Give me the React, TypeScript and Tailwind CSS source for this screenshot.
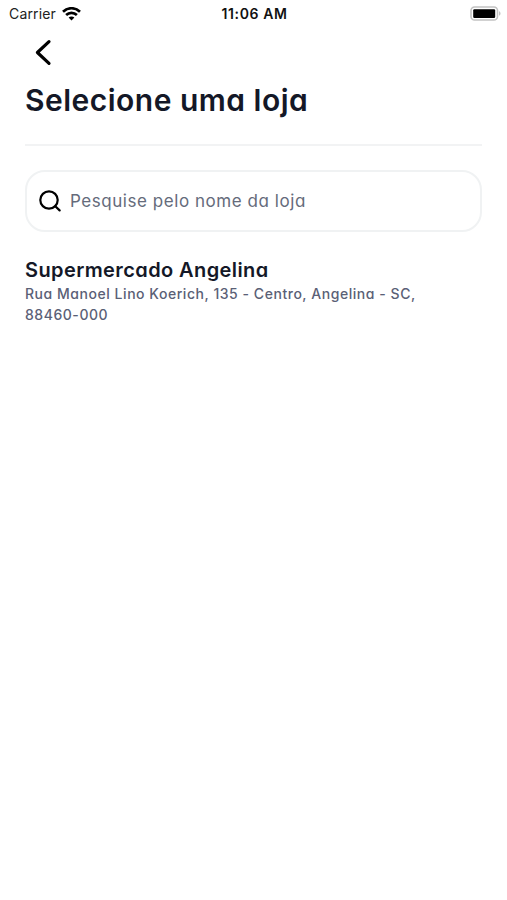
import React from 'react';

function WifiIcon() {
  return (
    <svg width="19" height="14" viewBox="0 0 19 14" fill="none" stroke="#000" strokeWidth="2.7">
      <path d="M1 4.7C5.8 0.1 13.2 0.1 18 4.7" />
      <path d="M4.1 8.1C7.2 5.2 11.8 5.2 14.9 8.1" />
      <path d="M9.5 13.4L6.6 10.5C8.2 9 10.8 9 12.4 10.5Z" fill="#000" stroke="none" />
    </svg>
  );
}

function BatteryIcon() {
  return (
    <svg width="32" height="16" viewBox="0 0 32 16" fill="none">
      <rect x="1" y="1" width="26.5" height="13" rx="3.6" stroke="#c2c2c2" strokeWidth="1.6" />
      <rect x="3.2" y="3.2" width="22" height="8.8" rx="1.2" fill="#000" />
      <path d="M29 5.3C31 6 31 9 29 9.7Z" fill="#c2c2c2" />
    </svg>
  );
}

function StatusBar() {
  return (
    <header className="grid h-7 grid-cols-3 items-center pl-[7px] pr-[5px] font-[Inter,sans-serif]">
      <div className="flex items-center gap-[5px] pl-0.5">
        <span className="w-[48px] whitespace-nowrap text-[14px] leading-5 tracking-[0.15px] text-[#222]">Carrier</span>
        <WifiIcon />
      </div>
      <span className="whitespace-nowrap text-center text-[14px] font-semibold leading-5 tracking-[0.6px] text-[#111]">
        11:06 AM
      </span>
      <div className="flex justify-end">
        <BatteryIcon />
      </div>
    </header>
  );
}

export default function App() {
  return (
    <div className="min-h-screen bg-white font-[Inter,sans-serif] text-[#141827]">
      <StatusBar />
      <main className="px-[25px]">
        <button className="ml-[9px] mt-[11px] block" aria-label="Voltar">
          <svg width="18" height="27" viewBox="0 0 18 27" fill="none" stroke="#000" strokeWidth="3.2" strokeLinecap="round" strokeLinejoin="round">
            <path d="M15 2.7L3.4 13.5L15 24.3" />
          </svg>
        </button>
        <h1 className="mt-[14px] whitespace-nowrap text-[30px] font-semibold leading-10 tracking-[0.49px] [font-feature-settings:'cv11']">
          Selecione uma loja
        </h1>
        <hr className="mt-6 border-t-2 border-[#f2f3f4]" />
        <label className="mt-6 flex h-[62px] items-center rounded-[20px] border-2 border-[#f0f2f3] pl-3">
          <svg width="22" height="22" viewBox="0 0 22 22" fill="none" stroke="#000" strokeWidth="2.2" strokeLinecap="round">
            <circle cx="10" cy="10" r="8.7" />
            <path d="M16.3 16.3L20.6 20.4" />
          </svg>
          <span className="ml-[9px] whitespace-nowrap text-[17px] leading-6 tracking-[0.55px] text-[#656b7b] [font-feature-settings:'cv11']">
            Pesquise pelo nome da loja
          </span>
        </label>
        <section className="mt-6 [font-feature-settings:'cv11']">
          <h2 className="whitespace-nowrap text-[20px] font-semibold leading-7 tracking-[0.4px]">Supermercado Angelina</h2>
          <p className="whitespace-nowrap text-[14px] font-medium leading-[20.5px] tracking-[0.54px] text-[#5a6076]">
            Rua Manoel Lino Koerich, 135 - Centro, Angelina - SC,
            <br />
            88460-000
          </p>
        </section>
      </main>
    </div>
  );
}
